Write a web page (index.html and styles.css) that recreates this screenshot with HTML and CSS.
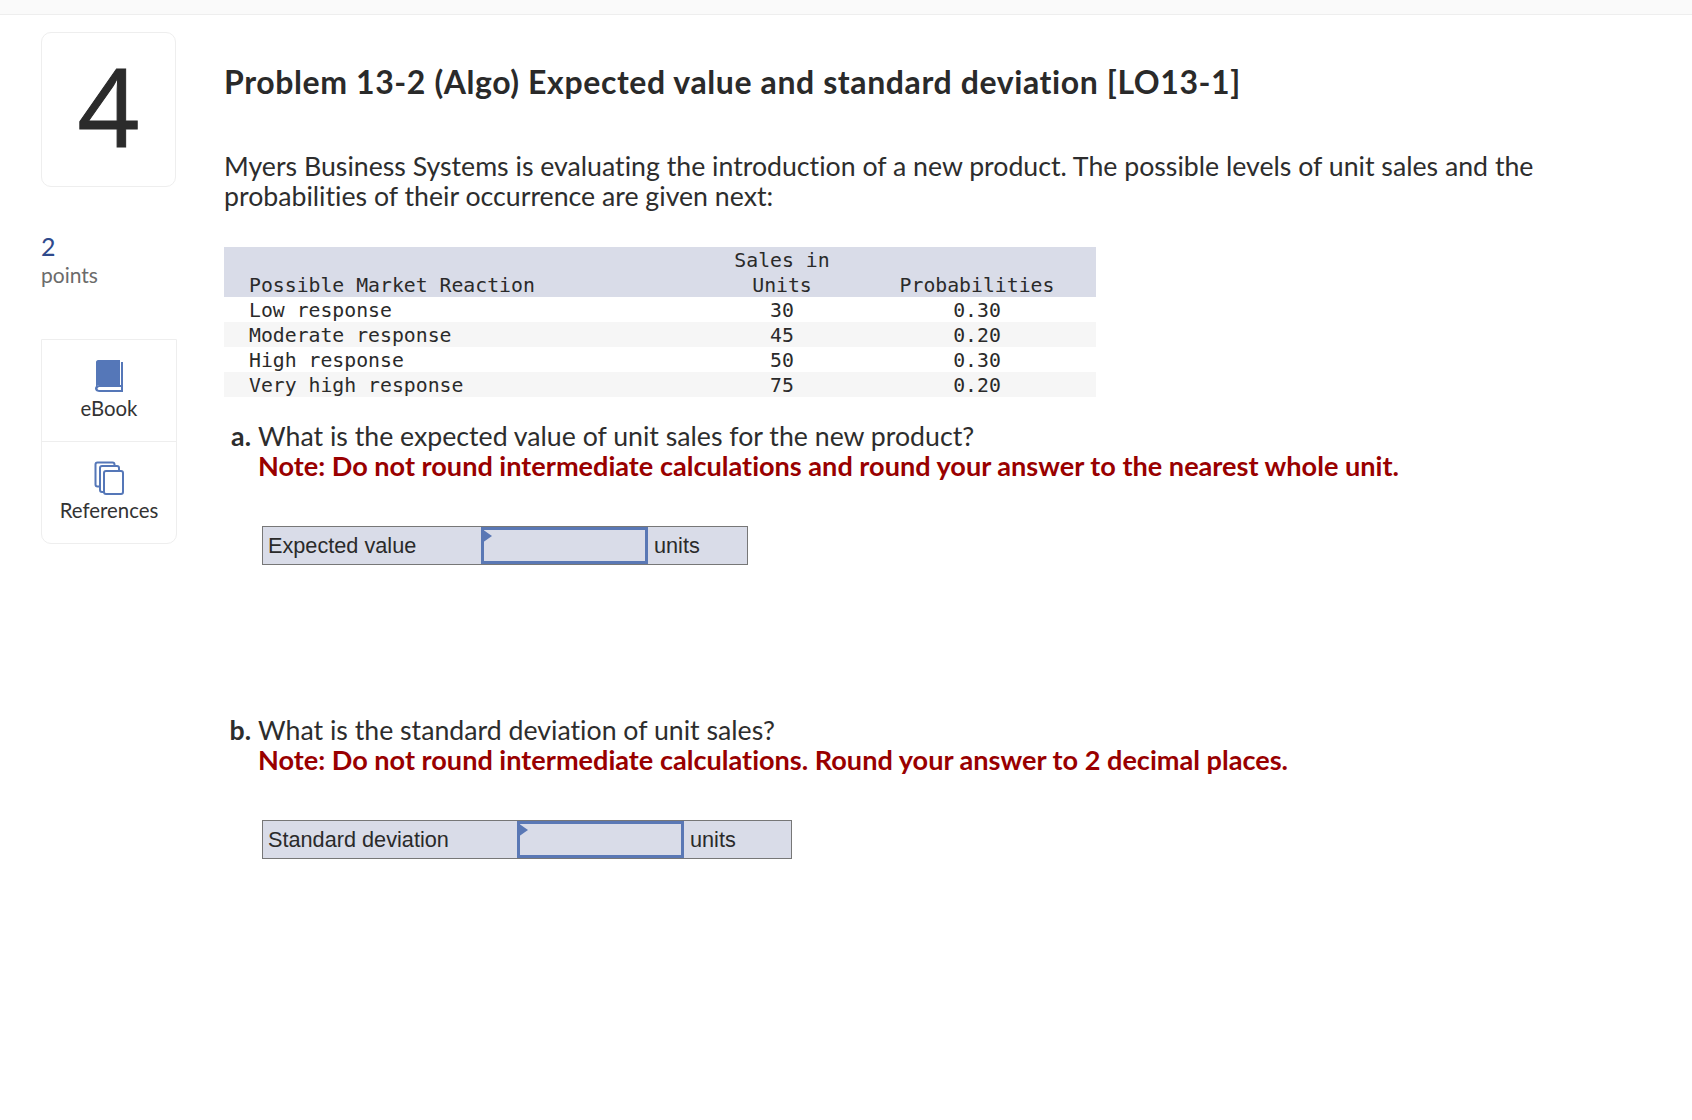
FILE: index.html
```html
<!DOCTYPE html>
<html lang="en">
<head>
<meta charset="utf-8">
<title>Problem 13-2</title>
<link rel="stylesheet" href="styles.css">
</head>
<body>
<div class="topbar"></div>
<div class="page">
  <aside class="side">
    <div class="qnum">4</div>
    <div class="points"><div class="pts-n">2</div><div class="pts-l">points</div></div>
    <div class="tools">
      <div class="tool">
        <svg class="ico" width="30" height="34" viewBox="0 0 30 34"><path d="M4 1H26V26H6C4.5 26 3 26.6 2 27.5V3C2 2 3 1 4 1Z" fill="#5577b8"/><path d="M27 3H29V33H6C3.5 33 1 32 1 29.500C1 27 3.500 26 6 26H27ZM6 28C4.500 28 3.500 28.700 3.500 29.500C3.500 30.500 4.500 31 6 31H27V28Z" fill="#5577b8"/></svg>
        <span class="tool-l">eBook</span>
      </div>
      <div class="tool">
        <svg class="ico" width="30" height="34" viewBox="0 0 30 34" fill="#fff" stroke="#5577b8" stroke-width="2"><rect x="1.500" y="1.500" width="19" height="24" rx="2"/><rect x="6" y="5" width="19" height="26" rx="2"/><rect x="10" y="10" width="19" height="23" rx="2"/></svg>
        <span class="tool-l">References</span>
      </div>
    </div>
  </aside>
  <main class="main">
    <h1 class="title">Problem 13-2 (Algo) Expected value and standard deviation [LO13-1]</h1>
    <p class="intro">Myers Business Systems is evaluating the introduction of a new product. The possible levels of unit sales and the probabilities of their occurrence are given next:</p>
    <table class="data">
      <thead>
        <tr class="hd"><th class="c1"></th><th class="c2">Sales in</th><th class="c3"></th></tr>
        <tr class="hd"><th class="c1">Possible Market Reaction</th><th class="c2">Units</th><th class="c3">Probabilities</th></tr>
      </thead>
      <tbody>
        <tr><td class="c1">Low response</td><td class="c2">30</td><td class="c3">0.30</td></tr>
        <tr class="alt"><td class="c1">Moderate response</td><td class="c2">45</td><td class="c3">0.20</td></tr>
        <tr><td class="c1">High response</td><td class="c2">50</td><td class="c3">0.30</td></tr>
        <tr class="alt"><td class="c1">Very high response</td><td class="c2">75</td><td class="c3">0.20</td></tr>
      </tbody>
    </table>
    <section class="part part-a">
      <div class="q"><b class="mark">a.</b><div><div>What is the expected value of unit sales for the new product?</div><div class="note">Note: Do not round intermediate calculations and round your answer to the nearest whole unit.</div></div></div>
      <div class="answer ans-a">
        <div class="a-label w-a">Expected value</div>
        <div class="a-input"></div>
        <div class="a-unit u-a">units</div>
      </div>
    </section>
    <section class="part part-b">
      <div class="q"><b class="mark">b.</b><div><div>What is the standard deviation of unit sales?</div><div class="note">Note: Do not round intermediate calculations. Round your answer to 2 decimal places.</div></div></div>
      <div class="answer ans-b">
        <div class="a-label w-b">Standard deviation</div>
        <div class="a-input"></div>
        <div class="a-unit u-b">units</div>
      </div>
    </section>
  </main>
</div>
</body>
</html>
```
FILE: styles.css
```css
* { box-sizing: border-box; }
html, body { margin: 0; padding: 0; background: #fff; }
body { height: 1120px; overflow: hidden; font-family: "Lato", "Noto Sans", sans-serif; font-variant-ligatures: none; color: #2d2d2d; }
.topbar { height: 15px; background: #fafafa; border-bottom: 1px solid #eee; }
.page { display: flex; padding: 17px 0 0 41px; }
.side { width: 183px; flex: none; }
.qnum { width: 135px; height: 155px; padding-bottom: 7px; border: 1px solid #eee; border-radius: 10px; display: flex; align-items: center; justify-content: center; font-family: "Open Sans", sans-serif; font-size: 108px; line-height: 1; color: #2b2b2b; -webkit-text-stroke: 1px #2b2b2b; }
.points { margin-top: 44px; }
.pts-n { font-size: 25px; line-height: 30px; color: #2f4a8c; }
.pts-l { font-size: 21px; line-height: 28px; color: #6b6b6b; }
.tools { margin-top: 50px; width: 136px; height: 205px; border: 1px solid #eee; border-radius: 0 0 10px 10px; }
.tool { height: 102px; display: flex; flex-direction: column; align-items: center; padding-top: 19px; }
.tool:first-child { height: 101px; }
.tool + .tool { border-top: 1px solid #eee; }
.ico { display: block; }
.tool-l { margin-top: 3px; font-size: 20.400px; line-height: 24px; color: #333; }
.main { flex: 1; }
.title { margin: 32px 0 0; font-size: 32px; line-height: 36px; letter-spacing: .6px; font-weight: 700; color: #2a2a2a; }
.intro { margin: 51px 0 0; width: 1370px; font-size: 26.700px; line-height: 30px; color: #2d2d2d; }
.data { margin-top: 36px; width: 872px; border-collapse: collapse; table-layout: fixed; font-family: "DejaVu Sans Mono", monospace; font-size: 19.800px; color: #2a2a2a; }
.data th, .data td { height: 25px; padding: 2px 0 0; font-weight: 400; line-height: 23px; white-space: nowrap; }
.hd { background: #d9dce8; }
.alt { background: #f6f6f6; }
.c1 { width: 482px; padding-left: 25px !important; text-align: left; }
.c2 { width: 152px; text-align: center; }
.c3 { width: 238px; text-align: center; }
.part-a { margin-top: 24px; }
.part-b { margin-top: 150px; }
.q { display: flex; font-size: 26.700px; line-height: 30px; color: #2d2d2d; }
.mark { width: 34px; text-align: right; padding-right: 7px; flex: none; white-space: nowrap; }
.note { font-size: 27.100px; font-weight: 700; color: #990000; }
.answer { display: flex; margin: 45px 0 0 38px; height: 39px; border: 1px solid #777; background: #d9dce8; font-family: "Liberation Sans", Arial, sans-serif; font-size: 21.700px; line-height: 37px; color: #2a2a2a; }
.a-label, .a-unit { flex: none; padding-left: 6px; }
.a-label { padding-left: 5px; }
.w-a { width: 218px; }
.w-b { width: 254px; }
.a-input { flex: none; position: relative; width: 167px; border: 3px solid #5a78b5; }
.a-input::before { content: ""; position: absolute; left: -2px; top: -1px; border-left: 10px solid #5a78b5; border-top: 7px solid transparent; border-bottom: 7px solid transparent; }
.u-a { width: 99px; }
.u-b { width: 107px; }
.ans-a { width: 486px; }
.ans-b { width: 530px; }
```
